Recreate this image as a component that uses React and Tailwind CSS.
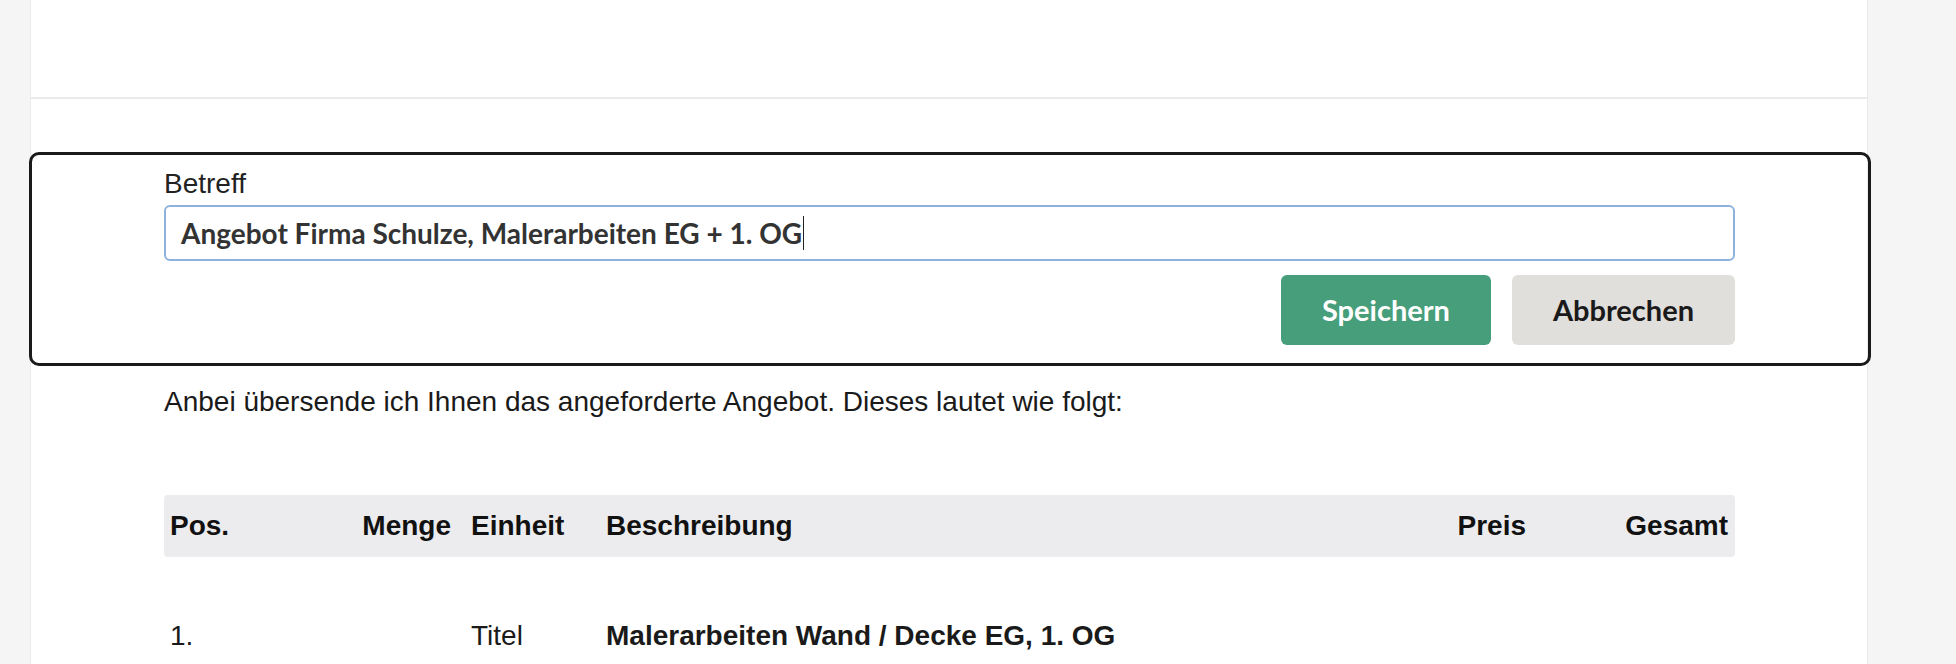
export default function App() {
  const cols = [
    { label: 'Pos.', w: 'w-[137px]', align: 'text-left pl-[6px]' },
    { label: 'Menge', w: 'w-[161px]', align: 'text-right pr-[11px]' },
    { label: 'Einheit', w: 'w-[138px]', align: 'text-left pl-[9px]' },
    { label: 'Beschreibung', w: 'flex-1', align: 'text-left pl-[6px]' },
    { label: 'Preis', w: 'w-[204px]', align: 'text-right pr-[8px]' },
    { label: 'Gesamt', w: 'w-[201px]', align: 'text-right pr-[7px]' },
  ]

  return (
    <div className="min-h-screen bg-[#f5f5f5] flex font-['Liberation_Sans',Arial,sans-serif] text-[#1a1a1a]">
      <div className="ml-[30px] w-[1838px] min-h-[664px] bg-white border-x border-[#ebebeb]">
        <div className="h-[97px]" />
        <div className="h-[2px] bg-[#ebebeb]" />

        <div className="pt-[53px] pl-[133px] pr-[132px]">
          {/* focused subject editor */}
          <div className="-ml-[135px] -mr-[136px] border-[3px] border-[#1a1a1a] rounded-[10px] pl-[132px] pr-[133px] pt-[13px] pb-[18px]">
            <label className="block text-[28px] leading-[32px] text-[#222]">Betreff</label>
            <div className="mt-[5px] h-[56px] flex items-center border-2 border-[#8db3dc] rounded-[6px] pl-[15px] font-['Lato',sans-serif] font-bold text-[28px] text-[#333]">
              <span>Angebot Firma Schulze, Malerarbeiten EG + 1. OG</span>
              <span className="ml-[1px] w-[1px] h-[34px] bg-[#222]" />
            </div>
            <div className="mt-[14px] flex justify-end gap-[21px] font-['Lato',sans-serif] font-bold text-[29px]">
              <button className="h-[70px] px-[41px] rounded-[6px] bg-[#479e7b] text-white">Speichern</button>
              <button className="h-[70px] px-[41px] rounded-[6px] bg-[#e0dfdc] text-[#1a1a1a]">Abbrechen</button>
            </div>
          </div>

          <p className="mt-[20px] text-[28px] leading-[32px]">
            Anbei übersende ich Ihnen das angeforderte Angebot. Dieses lautet wie folgt:
          </p>

          <div className="mt-[77px] h-[62px] flex items-center bg-[#ececee] rounded-[4px] text-[28px] leading-[32px] font-bold text-[#111]">
            {cols.map((c) => (
              <div key={c.label} className={`${c.w} ${c.align}`}>
                {c.label}
              </div>
            ))}
          </div>

          <div className="mt-[63px] flex text-[28px] leading-[32px]">
            <div className="w-[137px] pl-[6px]">1.</div>
            <div className="w-[161px]" />
            <div className="w-[138px] pl-[9px]">Titel</div>
            <div className="flex-1 pl-[6px] font-bold">Malerarbeiten Wand / Decke EG, 1. OG</div>
          </div>
        </div>
      </div>
    </div>
  )
}
